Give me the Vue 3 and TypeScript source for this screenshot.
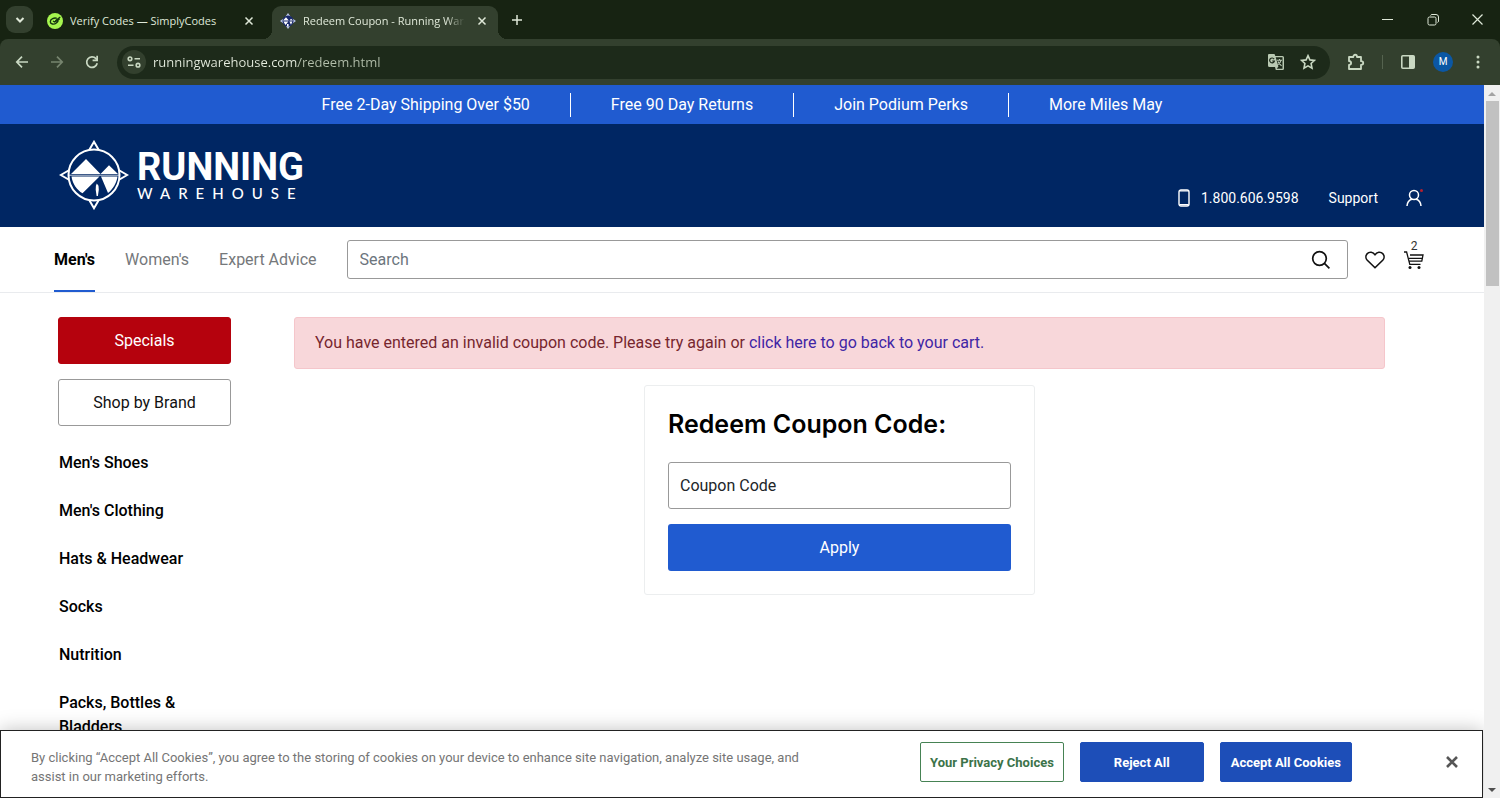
<script setup lang="ts">
import { ref } from 'vue'

interface NavTab { label: string; active: boolean }

const promos: string[] = ['Free 2-Day Shipping Over $50', 'Free 90 Day Returns', 'Join Podium Perks', 'More Miles May']
const tabs: NavTab[] = [
  { label: "Men's", active: true },
  { label: "Women's", active: false },
  { label: 'Expert Advice', active: false },
]
const categories: string[] = ["Men's Shoes", "Men's Clothing", 'Hats & Headwear', 'Socks', 'Nutrition', 'Packs, Bottles & Bladders']

const address = ref<string>('runningwarehouse.com/redeem.html')
const search = ref<string>('')
const coupon = ref<string>('')
</script>

<template>
  <div class="window">
    <header class="strip">
      <button class="tab-search" aria-label="Search tabs">
        <svg width="10" height="10" viewBox="0 0 10 10"><path d="M1.5 3 5 6.5 8.5 3" fill="none" stroke="currentColor" stroke-width="2" /></svg>
      </button>
      <div class="tab">
        <svg class="favicon" width="16" height="16" viewBox="0 0 16 16">
          <circle cx="8" cy="8" r="8" fill="#a6f64f" />
          <path d="M9.8 5.400C7.400 4.400 3.300 6 3.300 8.700c0 2.500 3.700 3.200 6 1.300 1.500-1.200 2-2.500 1.600-3.300L7.600 9 6 8" fill="none" stroke="#15350f" stroke-width="1.400" />
          <path d="M8.300 7.800 13.300 4M11 6.500l1.800-.3" fill="none" stroke="#15350f" stroke-width="1.200" />
        </svg>
        <span class="tab-title">Verify Codes — SimplyCodes</span>
        <button class="tab-close" aria-label="Close tab">
          <svg width="10" height="10" viewBox="0 0 10 10"><path d="m1.500 1.500 7 7m0-7-7 7" stroke="currentColor" stroke-width="1.500" /></svg>
        </button>
      </div>
      <div class="tab current">
        <svg class="favicon" width="16" height="16" viewBox="0 0 16 16">
          <path d="m8 0 2.500 3.500 2 2L16 8l-3.500 2.500-2 2L8 16l-2.500-3.500-2-2L0 8l3.500-2.500 2-2z" fill="#b9c4e4" />
          <circle cx="8" cy="8" r="5.500" fill="#18286a" />
          <path d="m3 7.600 3-3.400 2.800 3.400zm6.500 0 1.500-1.800 2 1.800zM3.400 8.500h5L5.500 12zm6 0h3l-1.400 3.300zM7 11h1.600v2.400H7z" fill="#fff" />
        </svg>
        <span class="tab-title fade">Redeem Coupon - Running Warehouse</span>
        <button class="tab-close" aria-label="Close tab">
          <svg width="10" height="10" viewBox="0 0 10 10"><path d="m1.500 1.500 7 7m0-7-7 7" stroke="currentColor" stroke-width="1.500" /></svg>
        </button>
      </div>
      <button class="new-tab" aria-label="New tab">
        <svg width="12" height="12" viewBox="0 0 12 12"><path d="M6 1v10M1 6h10" stroke="currentColor" stroke-width="1.500" /></svg>
      </button>
      <div class="controls">
        <button aria-label="Minimize"><svg width="11" height="11" viewBox="0 0 11 11"><path d="M0 5.500h11" stroke="currentColor" /></svg></button>
        <button aria-label="Restore">
          <svg width="12" height="12" viewBox="0 0 12 12" fill="none" stroke="currentColor"><rect x="1" y="3" width="8" height="8" rx="1.500" /><path d="M3.500 1.500c.3-.7.8-1 1.500-1h4a2.500 2.500 0 0 1 2.500 2.500v4c0 .7-.4 1.300-1 1.500" /></svg>
        </button>
        <button aria-label="Close"><svg width="11" height="11" viewBox="0 0 11 11"><path d="m.5.5 10 10m0-10-10 10" stroke="currentColor" stroke-width="1.200" /></svg></button>
      </div>
    </header>

    <div class="toolbar-back">
      <div class="toolbar">
        <button class="tool" aria-label="Back"><svg width="14" height="14" viewBox="0 0 14 14"><path d="M13 7H2m5-5.300L1.800 7 7 12.300" fill="none" stroke="currentColor" stroke-width="1.700" /></svg></button>
        <button class="tool dim" aria-label="Forward"><svg width="14" height="14" viewBox="0 0 14 14"><path d="M1 7h11M7 1.700 12.200 7 7 12.300" fill="none" stroke="currentColor" stroke-width="1.700" /></svg></button>
        <button class="tool" aria-label="Reload"><svg width="14" height="14" viewBox="0 0 14 14"><path d="M12.200 8.300A5.300 5.300 0 1 1 11 3.600l1.300 1.400" fill="none" stroke="currentColor" stroke-width="1.700" /><path d="M13 .8v5.400H7.600V4.500h3.700V.8z" fill="currentColor" /></svg></button>
        <div class="omnibox">
          <button class="site-info" aria-label="Site information">
            <svg width="14" height="12" viewBox="0 0 14 12" fill="none" stroke="currentColor" stroke-width="1.600"><circle cx="3" cy="2.800" r="1.800" /><path d="M7.500 2.800H13M1 9.200h5.500" /><circle cx="11" cy="9.200" r="1.800" /></svg>
          </button>
          <input v-model="address" class="address" type="text" aria-label="Address" />
          <button class="tool small" aria-label="Translate">
            <svg width="18" height="18" viewBox="0 0 18 18">
              <path d="M2 1h5.500l.8 2H15.500A1.500 1.500 0 0 1 17 4.500v11a1.500 1.500 0 0 1-1.500 1.500H8.800L8 14H2.500A1.500 1.500 0 0 1 1 12.500V2a1 1 0 0 1 1-1z" fill="#b9c9b2" />
              <path d="M8.700 4.200h6.800v11.500H9.700l1.700-2.200z" fill="#1d2a1a" />
              <path d="M7.100 6.100A2.400 2.400 0 1 0 7.400 8H5.200" fill="none" stroke="#1d2a1a" stroke-width="1.200" />
              <path d="M10 7.200h5M12.500 6v1.200M14 7.400c-.5 2-1.800 3.600-3.300 4.500M11 8.500c.6 1.600 2 3.200 3.600 4.400" fill="none" stroke="#b9c9b2" stroke-width="1.100" />
            </svg>
          </button>
          <button class="tool small" aria-label="Bookmark">
            <svg width="16" height="16" viewBox="0 0 16 16"><path d="m8 1.700 1.900 4.200 4.600.5-3.400 3.100.9 4.600L8 11.800l-4 2.300.9-4.600L1.500 6.400l4.600-.5z" fill="none" stroke="currentColor" stroke-width="1.600" /></svg>
          </button>
        </div>
        <button class="tool" aria-label="Extensions">
          <svg width="18" height="18" viewBox="0 0 18 18"><path d="M2 4h4.300c0-3 3.700-3 3.700 0h4v4.200c3 0 3 3.600 0 3.600V16H2v-4c2.800-.3 2.800-3.700 0-4z" fill="none" stroke="currentColor" stroke-width="1.800" stroke-linejoin="round" /></svg>
        </button>
        <span class="rule"></span>
        <button class="tool" aria-label="Side panel">
          <svg width="14" height="14" viewBox="0 0 14 14"><rect x=".8" y=".8" width="12.400" height="12.400" rx="1" fill="none" stroke="currentColor" stroke-width="1.600" /><path d="M8 1h5v12H8z" fill="currentColor" /></svg>
        </button>
        <button class="tool" aria-label="Profile"><span class="avatar">M</span></button>
        <button class="tool" aria-label="Menu">
          <svg width="4" height="14" viewBox="0 0 4 14" fill="currentColor"><circle cx="2" cy="2" r="1.500" /><circle cx="2" cy="7" r="1.500" /><circle cx="2" cy="12" r="1.500" /></svg>
        </button>
      </div>
    </div>

    <div class="viewport">
      <div class="page">
        <div class="promos">
          <a v-for="p in promos" :key="p" href="#" class="promo">{{ p }}</a>
        </div>

        <div class="brand-bar">
          <a href="#" class="logo" aria-label="Running Warehouse">
            <svg width="70" height="70" viewBox="0 0 70 70">
              <g fill="none" stroke="#fff" stroke-width="2">
                <circle cx="35" cy="35" r="25.500" />
                <path d="M30.500 9.500 35 1.800l4.500 7.700M30.500 60.500 35 68.200l4.500-7.700M9.500 30.500 1.800 35l7.700 4.500M60.500 30.500l7.700 4.500-7.700 4.500" />
              </g>
              <path d="M12 34 27 19l14.500 15L50 25.300 59 34zM12.500 36.500h28L23.500 53.300C18 50 13.500 44 12.500 36.500zM42 36.500h16.500c-.8 6-4.200 12.500-9.500 16.500zM37.800 43.500l1.700 2.200.3 4-.9 6.300h-1.300l-.9-6.300.2-4z" fill="#fff" />
              <path d="M10 35.200h50" stroke="#fff" stroke-width=".8" />
            </svg>
            <span class="wordmark">
              <span class="word-top">RUNNING</span>
              <span class="word-bottom">WAREHOUSE</span>
            </span>
          </a>
          <div class="utility">
            <a href="#" class="phone">
              <svg width="12" height="18" viewBox="0 0 12 18"><rect x="1" y="1" width="10" height="16" rx="2" fill="none" stroke="#fff" stroke-width="1.400" /><path d="M1.500 2h9M1.500 15.700h9" stroke="#fff" stroke-width="1.200" /></svg>
              1.800.606.9598
            </a>
            <a href="#">Support</a>
            <a href="#" class="account" aria-label="Account">
              <svg width="18" height="18" viewBox="0 0 18 18"><g fill="none" stroke="#fff" stroke-width="1.500"><circle cx="9" cy="6" r="4.500" /><path d="M2 17c.2-4 2.200-6 4.800-6.800M16 17c-.2-4-2.200-6-4.800-6.800" /></g><circle cx="16.500" cy="1.500" r="1.500" fill="#b5202f" /></svg>
            </a>
          </div>
        </div>

        <nav class="main-nav">
          <a v-for="t in tabs" :key="t.label" href="#" class="nav-tab" :class="{ active: t.active }">{{ t.label }}</a>
          <form class="search" @submit.prevent>
            <input v-model="search" type="search" placeholder="Search" aria-label="Search" />
            <button aria-label="Submit search">
              <svg width="20" height="20" viewBox="0 0 20 20" fill="none" stroke="#111" stroke-width="1.700"><circle cx="8.500" cy="8.500" r="6.800" /><path d="m13.400 13.400 5 5" /></svg>
            </button>
          </form>
          <a href="#" class="nav-icon" aria-label="Wish list">
            <svg width="20" height="18" viewBox="0 0 20 18"><path d="M10 16.800 2.300 9.300C.6 7.500.5 4.700 2 2.900 4.300.3 8.300.7 10 3.800 11.700.7 15.700.3 18 2.900c1.500 1.800 1.400 4.600-.3 6.400z" fill="none" stroke="#111" stroke-width="1.600" stroke-linejoin="round" /></svg>
          </a>
          <a href="#" class="nav-icon cart" aria-label="Cart, 2 items">
            <span class="count">2</span>
            <svg width="20" height="18" viewBox="0 0 20 18"><path d="M0 1h2.600l3.200 12.300H16.500M6 4h13l-1.200 6.200H5.500M5 7.300h13" fill="none" stroke="#111" stroke-width="1.300" /><circle cx="6" cy="16.500" r="1.500" fill="#111" /><circle cx="15" cy="16.500" r="1.500" fill="#111" /></svg>
          </a>
        </nav>

        <div class="body">
          <aside class="side">
            <a href="#" class="side-btn red">Specials</a>
            <a href="#" class="side-btn">Shop by Brand</a>
            <ul>
              <li v-for="c in categories" :key="c"><a href="#">{{ c }}</a></li>
            </ul>
          </aside>
          <main class="main">
            <p class="alert" role="alert">You have entered an invalid coupon code. Please try again or <a href="#">click here to go back to your cart.</a></p>
            <form class="card" @submit.prevent>
              <h1>Redeem Coupon Code:</h1>
              <input v-model="coupon" type="text" placeholder="Coupon Code" aria-label="Coupon Code" />
              <button>Apply</button>
            </form>
          </main>
        </div>

        <section class="cookies" aria-label="Cookie notice">
          <p>By clicking “Accept All Cookies”, you agree to the storing of cookies on your device to enhance site navigation, analyze site usage, and assist in our marketing efforts.</p>
          <div class="cookie-actions">
            <button class="outline">Your Privacy Choices</button>
            <button class="reject">Reject All</button>
            <button>Accept All Cookies</button>
          </div>
          <button class="dismiss" aria-label="Close">
            <svg width="12" height="12" viewBox="0 0 12 12"><path d="m1 1 10 10m0-10-10 10" stroke="#565656" stroke-width="2.600" /></svg>
          </button>
        </section>
      </div>
      <div class="scrollbar" aria-hidden="true">
        <svg width="8" height="16" viewBox="0 0 8 16"><path d="m0 11 4-4 4 4z" fill="#a3a3a3" /></svg>
        <span class="thumb"></span>
        <svg width="8" height="16" viewBox="0 0 8 16"><path d="m0 6 4 4 4-4z" fill="#505050" /></svg>
      </div>
    </div>
  </div>
</template>

<style>
body { margin: 0; overflow: hidden; }
</style>

<style scoped>
* { box-sizing: border-box; }
button { border: 0; padding: 0; background: none; color: inherit; font: inherit; display: flex; align-items: center; justify-content: center; }
a { color: inherit; text-decoration: none; }
input { min-width: 0; font: inherit; outline: none; }
svg { display: block; flex: none; }
.window { height: 100vh; display: flex; flex-direction: column; font-family: Roboto, "Liberation Sans", sans-serif; font-size: 16px; color: #111; }

.strip { display: flex; align-items: center; height: 39px; padding-left: 6px; background: #172312; color: #dfe8d8; font-family: "Open Sans", "Noto Sans", sans-serif; font-size: 11px; }
.tab-search { width: 27px; height: 27px; margin-right: 6px; border-radius: 9px; background: #33402e; }
.tab { position: relative; display: flex; align-items: center; align-self: flex-end; width: 226px; height: 33px; margin-right: 7px; padding: 0 6px 4px 8px; gap: 7px; }
.tab.current { background: #33402e; border-radius: 9px 9px 0 0; margin-right: 5px; }
.tab.current::before, .tab.current::after { content: ""; position: absolute; bottom: 0; width: 9px; height: 9px; }
.tab.current::before { left: -9px; background: radial-gradient(circle at 0 0, #172312 9px, #33402e 9px); }
.tab.current::after { right: -9px; background: radial-gradient(circle at 100% 0, #172312 9px, #33402e 9px); }
.tab-title { flex: 1; overflow: hidden; white-space: nowrap; line-height: 20px; }
.fade { mask-image: linear-gradient(90deg, #000 88%, transparent); }
.tab-close { width: 20px; height: 20px; }
.new-tab { width: 28px; height: 28px; }
.controls { display: flex; margin-left: auto; height: 100%; }
.controls button { width: 45px; }

.toolbar-back { background: #172312; }
.toolbar { display: flex; align-items: center; gap: 7px; height: 46px; padding: 0 8px; border-radius: 8px 8px 0 0; background: #33402e; color: #c9d8c2; }
.tool { width: 28px; height: 28px; flex: none; }
.tool.dim { color: #77856f; }
.omnibox { flex: 1; display: flex; align-items: center; height: 33px; margin: 0 5px 0 4px; padding: 0 6px 0 5px; border-radius: 17px; background: #1d2a1a; font-family: "Open Sans", "Noto Sans", sans-serif; font-size: 13px; }
.site-info { width: 24px; height: 24px; border-radius: 50%; background: #33402e; flex: none; }
.address { flex: 1; height: 24px; margin-left: 7px; padding: 0; border: 0; background: linear-gradient(90deg, #e6eddf 145px, #b3bfab 145px); background-clip: text; color: transparent; }
.tool.small { width: 32px; }
.rule { width: 1px; height: 14px; margin: 0 4px 0 5px; background: #55634f; }
.avatar { width: 20px; height: 20px; border-radius: 50%; background: #0b57a4; color: #fff; font-size: 10px; line-height: 20px; text-align: center; }

.viewport { flex: 1; min-height: 0; display: flex; }
.page { position: relative; flex: 1; min-width: 0; overflow: hidden; background: #fff; }
.scrollbar { display: flex; flex-direction: column; align-items: center; width: 16px; background: #f0f0f0; }
.thumb { width: 13px; height: 26%; margin-bottom: auto; background: #c1c1c1; }

.promos { display: flex; align-items: center; justify-content: center; height: 39px; background: #205bd0; color: #fff; }
.promo { padding: 0 40px; line-height: 24px; }
.promo + .promo { border-left: 1px solid #fff; }

.brand-bar { display: flex; justify-content: space-between; height: 103px; padding: 16px 61px 0 59px; background: #002663; color: #fff; }
.logo { display: flex; align-items: flex-start; gap: 8px; height: 70px; }
.wordmark { display: flex; flex-direction: column; padding-top: 9px; }
.word-top { font: 700 38px/36px Roboto, sans-serif; }
.word-bottom { font: 500 15px/16px Lato, sans-serif; letter-spacing: 8px; }
.utility { display: flex; align-items: center; gap: 30px; height: 20px; margin-top: 48px; font-size: 14px; }
.phone { display: flex; align-items: center; gap: 11px; }
.account { margin-left: -3px; }

.main-nav { display: flex; align-items: center; height: 66px; padding: 0 60px 0 54px; border-bottom: 1px solid #e9ebee; }
.nav-tab { height: 65px; margin-right: 30px; border-bottom: 2px solid transparent; color: #75787b; line-height: 65px; }
.nav-tab.active { color: #000; font-weight: 700; border-color: #205bd0; }
.search { flex: 1; display: flex; align-items: center; height: 39px; margin-right: 17px; border: 1px solid #999; border-radius: 3px; }
.search input { flex: 1; height: 37px; padding: 0 12px; border: 0; background: none; appearance: none; }
.search input::placeholder { color: #6c757d; opacity: 1; }
.search button { width: 52px; height: 37px; }
.nav-icon + .nav-icon { margin-left: 19px; }
.cart { position: relative; }
.count { position: absolute; left: 0; right: 0; top: -13px; font-size: 12px; line-height: 16px; text-align: center; color: #333; }

.body { display: flex; gap: 63px; padding: 24px 99px 0 58px; }
.side { width: 173px; flex: none; }
.side-btn { display: block; height: 47px; margin-bottom: 15px; border: 1px solid #999; border-radius: 3px; line-height: 45px; text-align: center; }
.side-btn.red { border-color: #b5020d; background: #b5020d; color: #fff; }
.side ul { margin: 25px 0 0; padding: 0 1px; list-style: none; }
.side li { margin-bottom: 24px; line-height: 24px; font-weight: 500; color: #000; }
.main { flex: 1; min-width: 0; }
.alert { margin: 0 0 16px; padding: 13px 20px; border: 1px solid #f5c6cb; border-radius: 3px; background: #f8d7da; color: #76262e; line-height: 24px; }
.alert a { color: #3f25a5; }
.card { display: flex; flex-direction: column; width: 391px; max-width: 100%; margin: 0 auto; padding: 23px; border: 1px solid #eceeef; border-radius: 3px; }
.card h1 { margin: 0 0 23px; font: 600 25px/30px Inter, sans-serif; color: #000; }
.card input { height: 47px; margin-bottom: 15px; padding: 0 11px; border: 1px solid #999; border-radius: 3px; }
.card input::placeholder { color: #212529; opacity: 1; }
.card button { height: 47px; border-radius: 3px; background: #205bd0; color: #fff; }

.cookies { position: absolute; left: 0; right: 1px; bottom: 0; display: flex; align-items: center; height: 68px; padding: 0 24px 4px 30px; border: 1px solid #222; background: #fff; box-shadow: 0 0 18px rgba(0, 0, 0, .25); font-size: 13px; }
.cookies p { width: 780px; margin: 10px 0 0; line-height: 19px; color: #757575; }
.cookie-actions { display: flex; gap: 16px; margin-left: auto; }
.cookie-actions button { height: 40px; padding: 0 10px; border: 1px solid #1d4eb8; border-radius: 2px; background: #1d4eb8; color: #fff; font-weight: 700; }
.cookie-actions .outline { padding: 0 9px; border-color: #468254; background: #fff; color: #3c7349; }
.cookie-actions .reject { padding: 0 33px; }
.dismiss { width: 12px; height: 40px; margin-left: 94px; }
</style>
